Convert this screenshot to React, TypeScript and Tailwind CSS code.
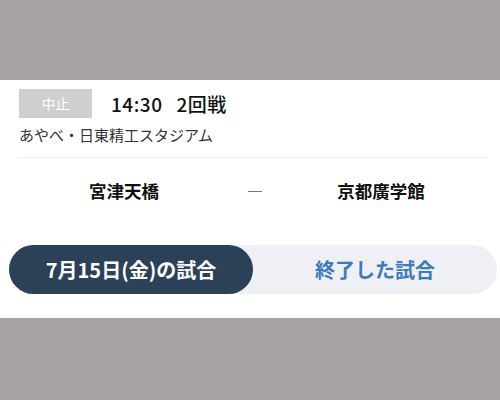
import React from 'react';

const font = { fontFamily: '"Noto Sans CJK JP", "Noto Sans", sans-serif' };

export default function App() {
  return (
    <div className="w-[500px] h-[400px] bg-[#a8a3a2] flex flex-col" style={font}>
      <div className="h-[80px]" />
      <div className="h-[238px] bg-white flex flex-col">
        {/* Match header */}
        <div className="px-[19px] pt-[9px]">
          <div className="flex items-center">
            <div className="w-[73px] h-[29px] bg-[#cfcfcf] text-white text-[14px] flex items-center justify-center">
              中止
            </div>
            <div className="ml-[19px] text-[19px] font-medium text-[#111] leading-none tracking-[0.5px]">
              14:30<span className="ml-[14px]">2回戦</span>
            </div>
          </div>
          <div className="mt-[6px] text-[15px] text-[#333] leading-[22px]">あやべ・日東精工スタジアム</div>
          <div className="mt-[11px] h-px bg-[#eeeeee] mr-[-7px]" />
        </div>

        {/* Teams */}
        <div className="flex items-center mt-[21px] h-[24px]">
          <div className="w-[248px] text-center text-[17.5px] font-bold text-[#111]">宮津天橋</div>
          <div className="w-[14px] h-px bg-[#777]" />
          <div className="flex-1 text-center text-[17.5px] font-bold text-[#111]">京都廣学館</div>
        </div>

        {/* Tabs */}
        <div className="mt-[42px] ml-[9px] mr-[3px] h-[49px] rounded-full bg-[#eff0f3] flex">
          <div className="w-[244px] h-full rounded-full bg-[#2b4158] text-white text-[20px] font-bold flex items-center justify-center">
            7月15日(金)の試合
          </div>
          <div className="flex-1 flex items-center justify-center text-[20px] font-bold text-[#3b79c0]">
            終了した試合
          </div>
        </div>
      </div>
    </div>
  );
}
